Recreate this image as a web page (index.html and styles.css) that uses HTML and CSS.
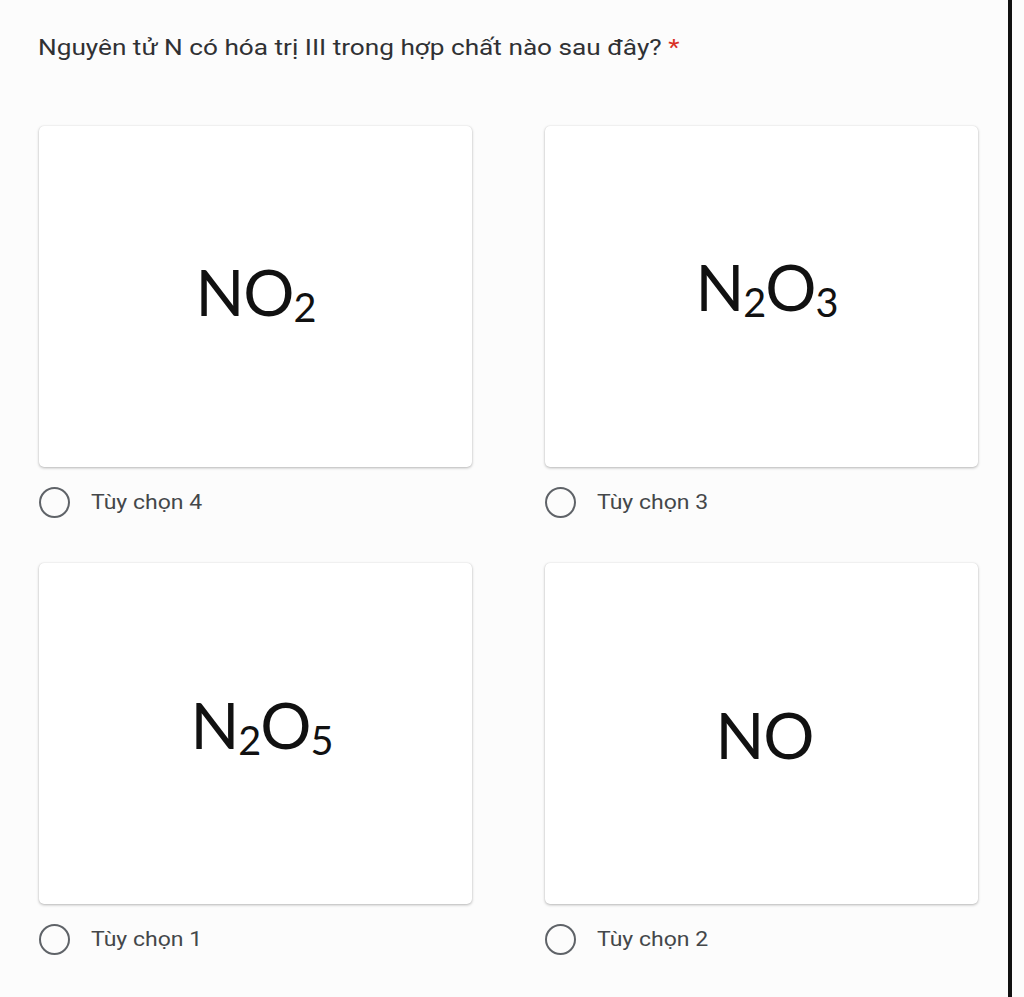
FILE: index.html
```html
<!DOCTYPE html>
<html lang="vi">
<head>
<meta charset="utf-8">
<title>Câu hỏi</title>
<link rel="stylesheet" href="styles.css">
</head>
<body>
<div class="page">
  <div class="question"><span class="qtext">Nguyên tử N có hóa trị III trong hợp chất nào sau đây? <span class="req">*</span></span></div>
  <div class="grid">
    <div class="choice">
      <div class="card"><span class="formula f1">NO<sub>2</sub></span></div>
      <div class="option"><span class="radio"></span><span class="label">Tùy chọn 4</span></div>
    </div>
    <div class="choice">
      <div class="card"><span class="formula f2">N<sub>2</sub>O<sub>3</sub></span></div>
      <div class="option"><span class="radio"></span><span class="label">Tùy chọn 3</span></div>
    </div>
    <div class="choice">
      <div class="card"><span class="formula f3">N<sub>2</sub>O<sub>5</sub></span></div>
      <div class="option"><span class="radio"></span><span class="label">Tùy chọn 1</span></div>
    </div>
    <div class="choice">
      <div class="card"><span class="formula f4">NO</span></div>
      <div class="option"><span class="radio"></span><span class="label">Tùy chọn 2</span></div>
    </div>
  </div>
</div>
</body>
</html>
```

FILE: styles.css
```css
html {
  margin: 0;
  padding: 0;
  background: #fcfcfc;
  overflow: hidden;
}

body {
  margin: 0;
  padding: 0;
  background: #fcfcfc;
}

.page {
  box-sizing: border-box;
  width: 1012px;
  height: 997px;
  border-right: 4px solid #111;
  padding: 33px 0 0 38px;
  font-family: Roboto, "Liberation Sans", sans-serif;
  color: #202124;
  background: #fcfcfc;
}

.question {
  font-size: 22px;
  line-height: 30px;
  height: 30px;
}

.qtext {
  display: inline-block;
  transform: scaleX(1.19);
  transform-origin: left center;
  white-space: nowrap;
  color: #303134;
}

.req {
  color: #d93025;
}

.grid {
  display: grid;
  grid-template-columns: 433px 433px;
  column-gap: 73px;
  row-gap: 43px;
  margin-top: 63px;
  margin-left: 1px;
}

.card {
  height: 341px;
  background: #fff;
  border-radius: 5px;
  box-shadow: 0 1px 3px rgba(0, 0, 0, 0.28), 0 0 1px rgba(0, 0, 0, 0.12);
  display: flex;
  align-items: center;
  justify-content: center;
}

.formula {
  font-family: Lato, "Open Sans", sans-serif;
  font-size: 64px;
  color: #111;
  line-height: 1;
  letter-spacing: -1px;
}

.formula sub {
  font-size: 0.62em;
  vertical-align: -0.16em;
  line-height: 0;
}

.f1 { transform: translate(0, -5px); }
.f2 { transform: translate(5px, -10px); }
.f3 { transform: translate(6px, -9px); }
.f4 { transform: translate(3px, 1px); }

.option {
  display: flex;
  align-items: center;
  gap: 21px;
  height: 36px;
  margin-top: 17px;
}

.radio {
  box-sizing: border-box;
  width: 31px;
  height: 31px;
  border: 2.5px solid #5f6368;
  border-radius: 50%;
  flex: none;
}

.label {
  display: inline-block;
  font-size: 20px;
  color: #44474a;
  transform: scaleX(1.15);
  transform-origin: left center;
}
```
